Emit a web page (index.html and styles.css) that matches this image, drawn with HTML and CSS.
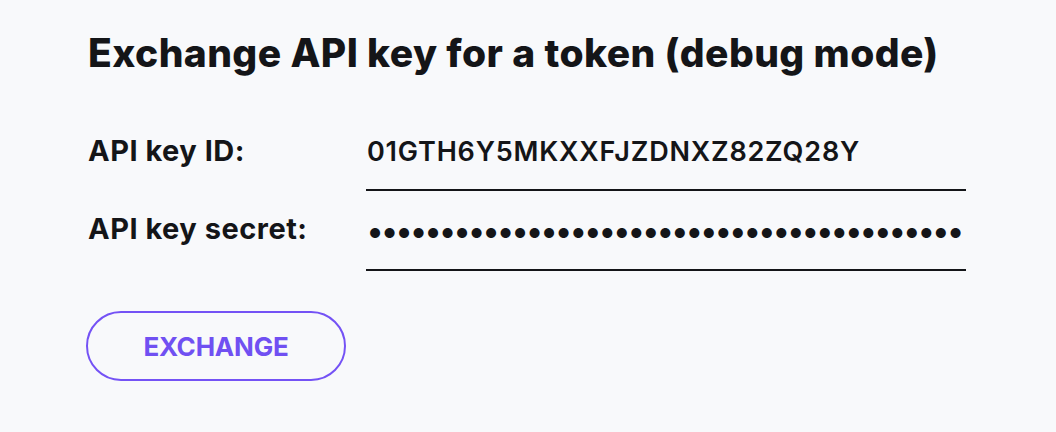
FILE: index.html
```html
<!DOCTYPE html>
<html>
<head>
<meta charset="utf-8">
<link rel="stylesheet" href="styles.css">
</head>
<body>
<main class="page">
  <h1 class="title">Exchange API key for a token (debug mode)</h1>
  <form class="form">
    <div class="row">
      <label class="label" for="kid">API key ID:</label>
      <input class="field" id="kid" type="text" value="01GTH6Y5MKXXFJZDNXZ82ZQ28Y">
    </div>
    <div class="row">
      <label class="label label-secret" for="ksec">API key secret:</label>
      <input class="field secret" id="ksec" type="password" value="abcdefghijabcdefghijabcdefghijabcdefghijk">
    </div>
    <div class="actions">
      <button class="btn" type="button">EXCHANGE</button>
    </div>
  </form>
</main>
</body>
</html>
```
FILE: styles.css
```css
html, body {
  margin: 0;
  padding: 0;
  background: #f8f9fb;
}
body {
  font-family: Inter, "Noto Sans", sans-serif;
  color: #141518;
}
.page {
  padding: 29px 88px 0;
}
.title {
  margin: 0;
  font-size: 39px;
  font-weight: 800;
  line-height: 48px;
  letter-spacing: 0.4px;
}
.form {
  margin-top: 34px;
  display: flex;
  flex-direction: column;
}
.row {
  display: flex;
  align-items: flex-end;
  height: 80px;
}
.label {
  width: 278px;
  font-size: 29px;
  font-weight: 700;
  line-height: 36px;
  letter-spacing: 0.5px;
  padding-bottom: 22px;
}
.label-secret {
  padding-bottom: 24px;
}
.field {
  width: 600px;
  height: 58px;
  box-sizing: border-box;
  border: none;
  border-bottom: 2px solid #141518;
  background: transparent;
  font-family: inherit;
  font-size: 27px;
  font-weight: 600;
  line-height: 36px;
  letter-spacing: 0.8px;
  color: #141518;
  padding: 0 0 20px 1px;
  outline: none;
}
.secret {
  font-size: 32px;
  letter-spacing: -1.6px;
  padding-bottom: 22px;
}
.actions {
  margin-top: 40px;
}
.btn {
  width: 260px;
  height: 70px;
  margin-left: -2px;
  border: 2px solid #7452f5;
  border-radius: 35px;
  background: transparent;
  color: #7050f2;
  font-family: inherit;
  font-size: 26px;
  font-weight: 700;
  letter-spacing: -0.2px;
  padding: 0;
}
```
